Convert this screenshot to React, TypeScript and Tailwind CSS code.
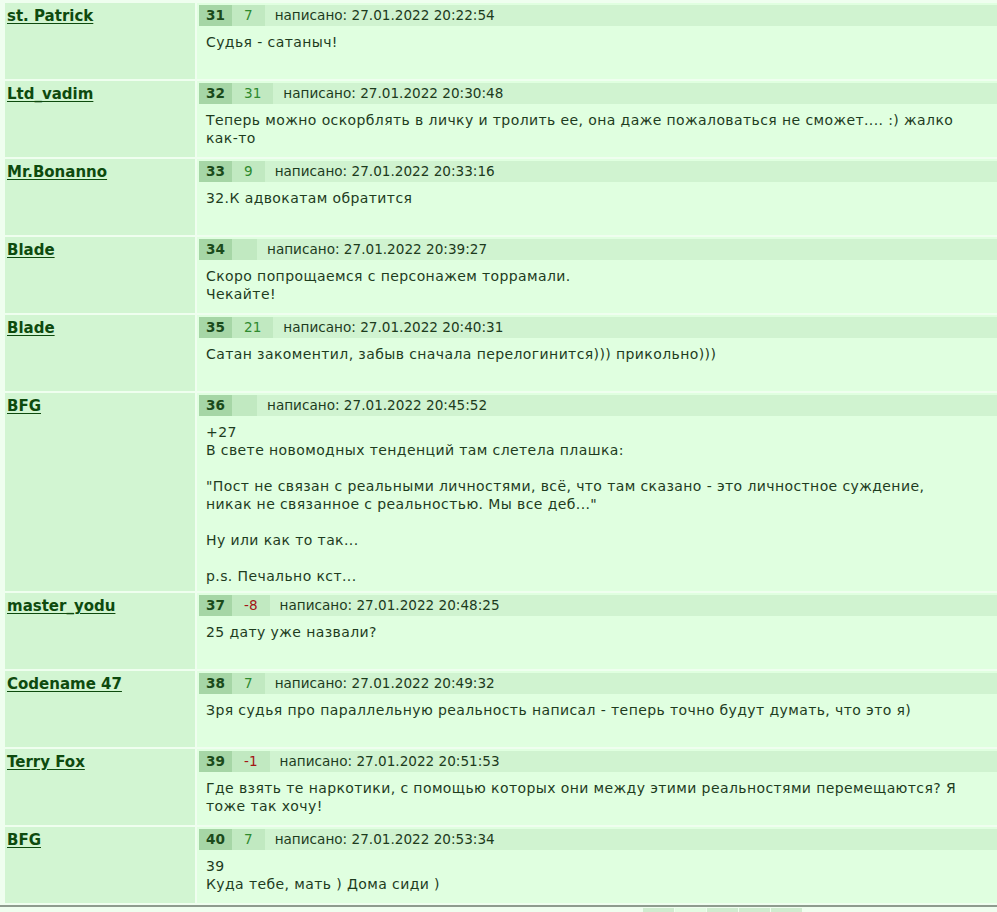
import React from "react";

type Post = {
  num: number;
  author: string;
  rating: number | null;
  date: string;
  lines: string[];
};

const posts: Post[] = [
  { num: 31, author: "st. Patrick", rating: 7, date: "27.01.2022 20:22:54", lines: ["Судья - сатаныч!"] },
  {
    num: 32,
    author: "Ltd_vadim",
    rating: 31,
    date: "27.01.2022 20:30:48",
    lines: ["Теперь можно оскорблять в личку и тролить ее, она даже пожаловаться не сможет.... :) жалко как-то"],
  },
  { num: 33, author: "Mr.Bonanno", rating: 9, date: "27.01.2022 20:33:16", lines: ["32.К адвокатам обратится"] },
  {
    num: 34,
    author: "Blade",
    rating: null,
    date: "27.01.2022 20:39:27",
    lines: ["Скоро попрощаемся с персонажем торрамали.", "Чекайте!"],
  },
  {
    num: 35,
    author: "Blade",
    rating: 21,
    date: "27.01.2022 20:40:31",
    lines: ["Сатан закоментил, забыв сначала перелогинится))) прикольно)))"],
  },
  {
    num: 36,
    author: "BFG",
    rating: null,
    date: "27.01.2022 20:45:52",
    lines: [
      "+27",
      "В свете новомодных тенденций там слетела плашка:",
      "",
      "\"Пост не связан с реальными личностями, всё, что там сказано - это личностное суждение, никак не связанное с реальностью. Мы все деб...\"",
      "",
      "Ну или как то так...",
      "",
      "p.s. Печально кст...",
    ],
  },
  { num: 37, author: "master_yodu", rating: -8, date: "27.01.2022 20:48:25", lines: ["25 дату уже назвали?"] },
  {
    num: 38,
    author: "Codename 47",
    rating: 7,
    date: "27.01.2022 20:49:32",
    lines: ["Зря судья про параллельную реальность написал - теперь точно будут думать, что это я)"],
  },
  {
    num: 39,
    author: "Terry Fox",
    rating: -1,
    date: "27.01.2022 20:51:53",
    lines: ["Где взять те наркотики, с помощью которых они между этими реальностями перемещаются? Я тоже так хочу!"],
  },
  { num: 40, author: "BFG", rating: 7, date: "27.01.2022 20:53:34", lines: ["39", "Куда тебе, мать ) Дома сиди )"] },
];

const PostRow = ({ post }: { post: Post }) => (
  <div className="flex gap-[2px] min-h-[76px]">
    <div className="w-[190px] shrink-0 bg-[#d2f5d2] pl-[2px] pt-[1px]">
      <a href="#" className="text-[15px] leading-[18px] font-bold text-[#0e4a0e] underline underline-offset-2">
        {post.author}
      </a>
    </div>
    <div className="flex-1 bg-[#e0ffe0] pl-[2px] pt-[2px] pb-[6px]">
      <div className="flex h-[21px] items-center bg-[#d0f3d0] text-[13.6px]">
        <div className="h-full w-[33px] flex items-center justify-center bg-[#a6d6a6] font-bold text-[#1b4a1b]">
          {post.num}
        </div>
        <div
          className={
            "h-full min-w-[25px] px-3 flex items-center bg-[#c1e9c1] " +
            (post.rating !== null && post.rating < 0 ? "text-[#a31515]" : "text-[#2f8a2f]")
          }
        >
          {post.rating}
        </div>
        <span className="ml-[10px] text-[#1d3b1d]">написано: {post.date}</span>
      </div>
      <div className="pl-[7px] pr-[30px] pt-[7px] text-[14px] tracking-[0.4px] leading-[18px] text-[#1e3c1e]">
        {post.lines.map((line, i) => (
          <div key={i} className="min-h-[18px]">
            {line}
          </div>
        ))}
      </div>
    </div>
  </div>
);

export default function App() {
  return (
    <div className="min-h-screen bg-[#effeef] font-['DejaVu_Sans',Verdana,sans-serif]">
      <div className="flex flex-col gap-[2px] pl-[5px] pt-[3px]">
        {posts.map((p) => (
          <PostRow key={p.num} post={p} />
        ))}
      </div>
      <div className="mt-[2px] border-t-2 border-[#8e9c8e]" />
      <div className="flex gap-px pl-[643px] pt-[1px]">
        <div className="h-[20px] w-[31px] bg-[#cfeccf]" />
        <div className="h-[20px] w-[31px] bg-[#e2fbe2]" />
        <div className="h-[20px] w-[31px] bg-[#cfeccf]" />
        <div className="h-[20px] w-[31px] bg-[#cfeccf]" />
        <div className="h-[20px] w-[31px] bg-[#cfeccf]" />
      </div>
    </div>
  );
}
